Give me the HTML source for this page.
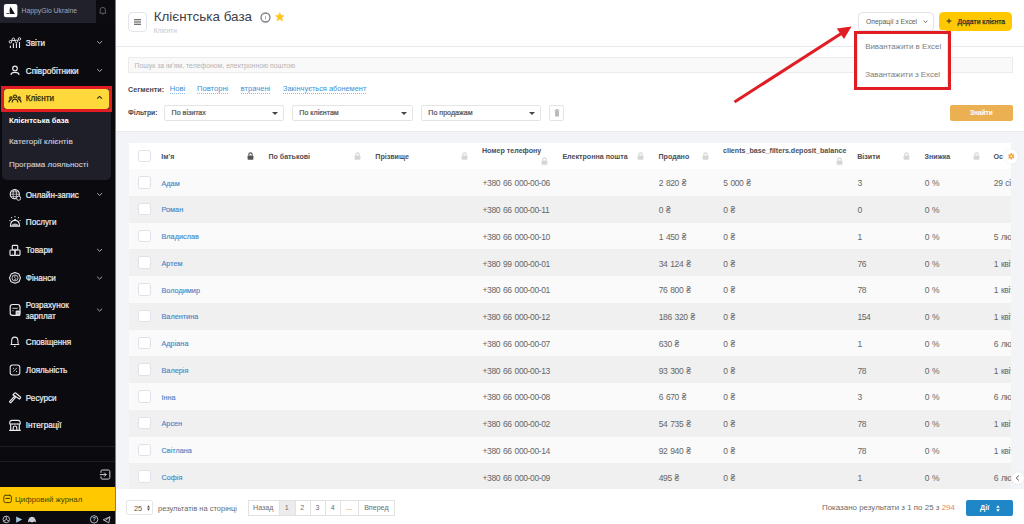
<!DOCTYPE html>
<html><head><meta charset="utf-8">
<style>
*{box-sizing:border-box}
html,body{margin:0;padding:0}
body{width:1024px;height:524px;overflow:hidden;position:relative;background:#fff;font-family:"Liberation Sans",sans-serif;}
.a{position:absolute}
#sb{position:absolute;left:0;top:0;width:115px;height:524px;background:#0a0a0f}
#sbh{position:absolute;left:0;top:0;width:96px;height:22.5px;background:#21212b}
#bell{position:absolute;left:96px;top:0;width:19px;height:22.5px;background:#0b0b10}
.logo{position:absolute;left:4px;top:4px;width:13.5px;height:13.5px;background:#fff;border-radius:2.5px}
.brand{position:absolute;left:21.5px;top:6px;font-size:6.8px;color:#9d9fae;line-height:10px;white-space:nowrap}
.mi{position:absolute;left:0;width:115px;height:20px}
.mi .t{position:absolute;left:25.8px;top:0;font-weight:bold;font-size:7.4px;color:#f2f2f5;line-height:20px;white-space:nowrap}
.mi svg.ic{position:absolute;left:9px;top:4.5px;width:12px;height:11px}
.mi svg.ch{position:absolute;left:96.5px;top:7.5px;width:6px;height:4px}
#sub{position:absolute;left:1.8px;top:110px;width:109.4px;height:69.6px;background:#1f1f29;border-radius:0 0 5px 5px}
.si{position:absolute;left:8.9px;font-size:8px;color:#c9c9d2;white-space:nowrap;line-height:10px}
#hl{position:absolute;left:1.1px;top:85.9px;width:110.9px;height:25.9px;background:#22222c;border:3px solid #e11c22;border-top-width:3.1px;border-bottom-width:3px}
#hly{position:absolute;left:4.1px;top:89px;width:104.9px;height:19.8px;background:#fdd93c;border-radius:3px}
.line{position:absolute;left:0;width:115px;height:1px;background:#1e1e24}
#dj{position:absolute;left:0;top:486.9px;width:115px;height:23.8px;background:#ffc800}
.main-border{position:absolute;left:115px;top:0;width:1px;height:524px;background:#7d7e84}

/* header */
#hbtn{position:absolute;left:128px;top:12px;width:18.8px;height:19.5px;border:1px solid #e2e5ee;border-radius:4px;background:#fff}
#title{position:absolute;left:153.7px;top:9.3px;font-size:13.45px;color:#3d4047;line-height:16px;white-space:nowrap}
#subt{position:absolute;left:153.7px;top:27.4px;font-size:6.7px;color:#c3c7cf;line-height:8px}
#hline{position:absolute;left:116px;top:46px;width:908px;height:1px;background:#e8e9ec}
.btn-x{position:absolute;left:857.8px;top:12px;width:76.2px;height:19.5px;border:1px solid #e0e3ea;border-radius:4.5px;background:#fff}
.btn-add{position:absolute;left:938.6px;top:12.4px;width:73.9px;height:18.7px;border-radius:4.5px;background:#ffc800}
#search{position:absolute;left:128px;top:57px;width:884.7px;height:16px;background:#f9f9f9;border:1px solid #ebebeb;border-radius:0}
#search span{position:absolute;left:5.5px;top:0.7px;font-size:6.9px;color:#b4b4b4;line-height:14px;white-space:nowrap}
.seg{position:absolute;top:85.2px;font-size:7.6px;line-height:7.9px;color:#3b8fd6;white-space:nowrap;border-bottom:1px dotted #8dbde6}
.lbl{position:absolute;font-size:7.2px;font-weight:bold;color:#464a52;line-height:10px;white-space:nowrap}
.sel{position:absolute;top:104.8px;height:15.8px;border:1px solid #e4e4e4;border-radius:2px;background:#fff}
.sel span{position:absolute;left:6.3px;top:0;font-size:7.1px;-webkit-text-stroke:0.22px #555;color:#555;line-height:14px;white-space:nowrap}
.sel i{position:absolute;right:4.5px;top:6px;width:0;height:0;border-left:3px solid transparent;border-right:3px solid transparent;border-top:3.5px solid #444}
#find{position:absolute;left:950px;top:105px;width:62.7px;height:16px;background:#ebb052;border-radius:2px;color:#fff;font-weight:bold;font-size:6.5px;text-align:center;line-height:16px}

/* table */
#band{position:absolute;left:116px;top:131px;width:908px;height:357.7px;background:#f3f4f8;border-top:1.3px solid #ececef}
#tbl{position:absolute;left:129.3px;top:142.8px;width:881.7px;height:345.9px;overflow:hidden;background:#fff}
.row{position:absolute;left:0;width:881.5px;height:26.65px}
.row.o{background:#fafafa}
.row.e{background:#f0f0f0}
.cb{position:absolute;left:9px;top:7px;width:12.5px;height:12.5px;border:1px solid #dde1ea;border-radius:2.5px;background:#fff}
.c{position:absolute;top:1.2px;line-height:26.65px;font-size:8.5px;letter-spacing:-0.38px;word-spacing:0.9px;color:#666;white-space:nowrap}
.nm{color:#4684c6;font-size:7.3px;letter-spacing:0;word-spacing:0;top:1.4px;-webkit-text-stroke:0.12px #4684c6}
.hd{position:absolute;font-size:7.1px;font-weight:bold;color:#4b4e55;white-space:nowrap;line-height:10px}
.lk{position:absolute;width:7px;height:8px}

/* footer */
#pp{position:absolute;left:126.1px;top:499.8px;width:26.7px;height:15.5px;border:1px solid #e6e6e6;border-radius:2px}
.pg{position:absolute;top:500.2px;height:15.3px;border:1px solid #e3e3e3;font-size:7px;color:#666;text-align:center;line-height:13.3px}
#dii{position:absolute;left:966.3px;top:500px;width:46.7px;height:16px;background:#1f86c7;border-radius:2px}
</style></head>
<body>
<!-- SIDEBAR -->
<div id="sb">
<div id="sbh"></div><div id="bell"></div>
<div id="sub"></div><div id="hl"></div><div id="hly"></div>
<div class="a" style="left:21.5px;top:6.59px;font-size:6.8px;line-height:8.5px;color:#a4a6b4;white-space:nowrap;">HappyGio Ukraine</div>
<div class="a" style="left:25.8px;top:38.68px;font-size:8.15px;line-height:10.19px;color:#ececf0;white-space:nowrap;-webkit-text-stroke:0.22px #ececf0;">Звіти</div>
<div class="a" style="left:25.8px;top:66.68px;font-size:8.15px;line-height:10.19px;color:#ececf0;white-space:nowrap;-webkit-text-stroke:0.22px #ececf0;">Співробітники</div>
<div class="a" style="left:25.8px;top:190.68px;font-size:8.15px;line-height:10.19px;color:#ececf0;white-space:nowrap;-webkit-text-stroke:0.22px #ececf0;">Онлайн-запис</div>
<div class="a" style="left:25.8px;top:218.48px;font-size:8.15px;line-height:10.19px;color:#ececf0;white-space:nowrap;-webkit-text-stroke:0.22px #ececf0;">Послуги</div>
<div class="a" style="left:25.8px;top:246.18px;font-size:8.15px;line-height:10.19px;color:#ececf0;white-space:nowrap;-webkit-text-stroke:0.22px #ececf0;">Товари</div>
<div class="a" style="left:25.8px;top:274.28px;font-size:8.15px;line-height:10.19px;color:#ececf0;white-space:nowrap;-webkit-text-stroke:0.22px #ececf0;">Фінанси</div>
<div class="a" style="left:25.8px;top:301.18px;font-size:8.15px;line-height:10.19px;color:#ececf0;white-space:nowrap;-webkit-text-stroke:0.22px #ececf0;">Розрахунок</div>
<div class="a" style="left:25.8px;top:311.68px;font-size:8.15px;line-height:10.19px;color:#ececf0;white-space:nowrap;-webkit-text-stroke:0.22px #ececf0;">зарплат</div>
<div class="a" style="left:25.8px;top:338.48px;font-size:8.15px;line-height:10.19px;color:#ececf0;white-space:nowrap;-webkit-text-stroke:0.22px #ececf0;">Сповіщення</div>
<div class="a" style="left:25.8px;top:366.28px;font-size:8.15px;line-height:10.19px;color:#ececf0;white-space:nowrap;-webkit-text-stroke:0.22px #ececf0;">Лояльність</div>
<div class="a" style="left:25.8px;top:393.88px;font-size:8.15px;line-height:10.19px;color:#ececf0;white-space:nowrap;-webkit-text-stroke:0.22px #ececf0;">Ресурси</div>
<div class="a" style="left:25.8px;top:421.38px;font-size:8.15px;line-height:10.19px;color:#ececf0;white-space:nowrap;-webkit-text-stroke:0.22px #ececf0;">Інтеграції</div>
<div class="a" style="left:25.8px;top:94.28px;font-size:8.15px;line-height:10.19px;color:#302806;white-space:nowrap;-webkit-text-stroke:0.25px #302806;">Клієнти</div>
<div class="a" style="left:8.9px;top:115.94px;font-size:7.58px;line-height:9.47px;color:#ffffff;font-weight:bold;white-space:nowrap;">Клієнтська база</div>
<div class="a" style="left:8.9px;top:136.83px;font-size:8.1px;line-height:10.12px;color:#d0d1da;white-space:nowrap;-webkit-text-stroke:0.12px #d0d1da;">Категорії клієнтів</div>
<div class="a" style="left:8.9px;top:160.43px;font-size:8.0px;line-height:10.0px;color:#d0d1da;white-space:nowrap;-webkit-text-stroke:0.12px #d0d1da;">Програма лояльності</div>
<div class="line" style="top:445.6px"></div><div class="line" style="top:460.8px"></div>
<div id="dj"></div>
<div class="a" style="left:15.0px;top:494.67px;font-size:7.85px;line-height:9.81px;color:#4a3f00;white-space:nowrap;">Цифровий журнал</div>
<svg class="a" style="left:0;top:0" width="115" height="524" viewBox="0 0 115 524">
<!-- logo -->
<rect x="3.9" y="3.9" width="13.5" height="13.3" rx="2.2" fill="#fff"/>
<path d="M10.6 6.8 C9.5 8.8 9.2 11.4 10.1 13.9 L14.9 13.9 Z" fill="#15151d"/>
<rect x="6.3" y="13.15" width="3.2" height="0.75" fill="#15151d"/>
<!-- bell -->
<path d="M100.2 12.3 V10 A2.6 2.6 0 0 1 105.4 10 V12.3 L106 13.2 H99.6 Z M102 14.1 H103.6" fill="none" stroke="#7a7e8c" stroke-width="0.7"/>
<!-- zviti -->
<g stroke="#ececf2" fill="none" stroke-width="1.15">
<path d="M10.4 45.8 V48 M13.4 43.2 V48 M16.4 43.2 V48 M19.5 41.9 V48" stroke-width="1.1"/>
<path d="M10.4 41.8 L13.4 39.3 L16.4 41.4 L19.5 38.9"/>
</g>
<g fill="#0a0a0f" stroke="#ececf2" stroke-width="0.9"><circle cx="10.4" cy="41.8" r="1.25"/><circle cx="13.4" cy="39.3" r="1.25"/><circle cx="16.4" cy="41.4" r="1.25"/><circle cx="19.5" cy="38.9" r="1.25"/></g>
<!-- person -->
<g stroke="#ececf2" fill="none" stroke-width="1.15"><circle cx="15" cy="68.4" r="2.3"/><path d="M11 75 C11 73.2 12.6 72.3 15 72.3 C17.4 72.3 19 73.2 19 75"/></g>
<!-- chevrons -->
<g fill="none" stroke="#c4c6cf" stroke-width="0.85">
<path d="M97.2 41.2 L99.6 43.5 L102 41.2"/><path d="M97.2 69.2 L99.6 71.5 L102 69.2"/>
<path d="M97.2 193.2 L99.6 195.5 L102 193.2"/><path d="M97.2 249 L99.6 251.3 L102 249"/><path d="M97.2 276.8 L99.6 279.1 L102 276.8"/>
<path d="M97.2 308.8 L99.6 311.1 L102 308.8"/>
</g>
<path d="M97.2 98.7 L99.6 96.4 L102 98.7" fill="none" stroke="#2b2608" stroke-width="1.1"/>
<!-- clients on yellow -->
<g fill="none" stroke="#2b2608" stroke-width="1.15" transform="translate(0,0.6)">
<circle cx="15" cy="95.9" r="1.5"/><circle cx="10.9" cy="97.5" r="1.2"/><circle cx="19.1" cy="97.5" r="1.2"/>
<path d="M12.2 102 C12.2 99.8 13.3 98.7 15 98.7 C16.7 98.7 17.8 99.8 17.8 102"/>
<path d="M9 101.8 C9 100.3 9.6 99.3 10.9 99.3"/><path d="M21 101.8 C21 100.3 20.4 99.3 19.1 99.3"/>
</g>
<!-- globe -->
<g stroke="#ececf2" fill="none" stroke-width="1.15"><circle cx="14.8" cy="194.2" r="4.6" stroke-width="1.1"/><ellipse cx="14.8" cy="194.2" rx="1.8" ry="4.6" stroke-width="0.7"/><path d="M10.3 194.2 H19.3 M11 191.8 H18.6 M11 196.6 H18.6" stroke-width="0.7"/></g>
<circle cx="18.6" cy="198.2" r="2.1" fill="#0a0a0f" stroke="#e8e8ee" stroke-width="0.9"/>
<!-- service bell -->
<g stroke="#ececf2" fill="none" stroke-width="1.15"><path d="M10.4 226.3 C10.4 222.6 12.3 220.4 15 220.4 C17.7 220.4 19.6 222.6 19.6 226.3 Z" stroke-width="1.1"/><path d="M14.2 219.6 H15.8"/></g>
<path d="M11 226 C11.5 224.5 13 223.5 15 223.5 C17 223.5 18.5 224.5 19 226 Z" fill="#b8b8c0"/>
<g fill="#e8e8ee"><circle cx="15" cy="216.7" r="0.65"/><circle cx="11.6" cy="217.7" r="0.6"/><circle cx="18.4" cy="217.7" r="0.6"/><circle cx="9.9" cy="220.6" r="0.6"/><circle cx="20.1" cy="220.6" r="0.6"/></g>
<!-- goods -->
<g stroke="#ececf2" fill="none" stroke-width="1.15" stroke-width="0.95"><rect x="12.3" y="245.4" width="5.4" height="4.6" rx="0.8"/><rect x="10" y="250" width="5" height="5.4" rx="0.8"/><rect x="15" y="250" width="5" height="5.4" rx="0.8"/></g>
<g fill="#e8e8ee"><circle cx="15" cy="248.5" r="0.4"/><circle cx="12.5" cy="254" r="0.4"/><circle cx="17.5" cy="254" r="0.4"/></g>
<!-- finance -->
<path d="M15 272.5 L18.9 274.1 L20.5 277.9 L18.9 281.7 L15 283.3 L11.1 281.7 L9.5 277.9 L11.1 274.1 Z" fill="none" stroke="#ececf2" stroke-width="1.1" stroke-linejoin="round"/>
<circle cx="15" cy="277.9" r="3" fill="none" stroke="#ececf2" stroke-width="0.75"/>
<path d="M16.1 276.5 C15.9 276.1 15.5 275.9 15 275.9 C14.4 275.9 14 276.2 14 276.8 C14 277.9 16.1 277.6 16.1 278.9 C16.1 279.5 15.6 279.8 15 279.8 C14.5 279.8 14.1 279.6 13.9 279.2 M15 275.3 V275.9 M15 279.8 V280.5" fill="none" stroke="#ececf2" stroke-width="0.6"/>
<!-- salary -->
<g stroke="#ececf2" fill="none" stroke-width="1.15"><rect x="10.2" y="304.5" width="9.8" height="10.8" rx="2.4"/><path d="M12.3 308.3 H17.7 M12.3 310.8 H13.4" stroke-width="0.8"/></g>
<rect x="15.6" y="310.4" width="4.7" height="5.5" rx="1" fill="#e0e0e6"/><path d="M16.8 313 H19" stroke="#666" stroke-width="0.6"/>
<!-- notifications -->
<g stroke="#ececf2" fill="none" stroke-width="1.15"><path d="M11.2 344.5 C11.8 343.5 11.7 342.4 11.7 340.6 C11.7 338.3 13 337.1 14.8 337.1 C16.6 337.1 17.9 338.3 17.9 340.6 C17.9 342.4 17.8 343.5 18.6 344.5 Z" stroke-width="1.05"/><path d="M14 346.4 H15.6" stroke-width="1"/></g>
<!-- loyalty -->
<g stroke="#ececf2" fill="none" stroke-width="1.15"><rect x="10.2" y="364.9" width="9.6" height="10" rx="2.4" stroke-width="1.05"/><path d="M13.3 371.6 L16.9 367.8" stroke-width="0.8"/></g>
<g fill="#e8e8ee"><circle cx="13.5" cy="368.2" r="0.55"/><circle cx="16.6" cy="371.4" r="0.55"/></g>
<!-- resources hammer -->
<g stroke="#ececf2" fill="none" stroke-width="1.15" stroke-width="0.95"><path d="M10 402.4 L9.6 401.6 L14.2 396.6 L15.4 397.6 L10.8 402.8 Z"/><path d="M13 394.8 L14.3 393.4 C14.8 392.9 15.5 392.9 16 393.3 L20.4 397 C20.8 397.4 20.7 397.9 20.4 398.2 L19.5 399 Z"/></g>
<!-- integrations store -->
<g stroke="#ececf2" fill="none" stroke-width="1.15" stroke-width="0.95"><path d="M9.8 424 C9.5 421.8 10.3 420.3 12 420.3 H18 C19.7 420.3 20.5 421.8 20.2 424 Z"/><path d="M10.7 424 V430.3 M19.3 424 V430.3 M9.2 430.3 H20.8"/><path d="M13.2 430.3 V427.6 C13.2 426.6 14 426 15 426 C16 426 16.8 426.6 16.8 427.6 V430.3"/></g>
<g fill="#e8e8ee"><circle cx="12.5" cy="424" r="0.5"/><circle cx="15" cy="424" r="0.5"/><circle cx="17.5" cy="424" r="0.5"/></g>
<!-- logout -->
<g fill="none" stroke="#dadae0" stroke-width="0.95"><path d="M102.2 470 H108.3 C109.2 470 109.8 470.6 109.8 471.5 V477.6 C109.8 478.5 109.2 479.1 108.3 479.1 H102.2 C101.5 479.1 101 478.6 101 477.9 V476.4 M101 472.8 V471.2 C101 470.5 101.5 470 102.2 470"/><path d="M99.8 474.6 H106.2 M104.2 472.6 L106.2 474.6 L104.2 476.6"/></g>
<!-- calendar on yellow -->
<g fill="none" stroke="#4f4300" stroke-width="1"><rect x="3.8" y="495.3" width="7.6" height="7.3" rx="1.8"/><path d="M5.4 498.4 H9.9" stroke-width="1.1"/></g><g fill="#4f4300"><circle cx="5.3" cy="495.2" r="0.6"/><circle cx="9.5" cy="495.2" r="0.6"/></g>
<!-- bottom icons -->
<g fill="none" stroke="#bcc0cc" stroke-width="0.95"><circle cx="6.3" cy="519.4" r="3.3"/><path d="M6.3 519.4 V516.1 M6.3 519.4 L3.6 521.2 M6.3 519.4 L9 521.2"/>
<circle cx="94.1" cy="519.4" r="3.7"/><path d="M103.2 519.8 L110 516.8 L108.8 522.9 Z M105.3 520.6 L110 516.8"/></g>
<path d="M16.2 516.4 L22.3 519.6 L16.2 522.8 Z" fill="#a8c4dc"/>
<path d="M28 522.5 C28 519.8 29.4 516.8 32 516.8 C34.6 516.8 36 519.8 36 522.5 L34.5 521.6 L32 522.6 L29.5 521.6 Z" fill="#c8ccd8"/>
<text x="94.1" y="521.4" font-size="5.6" font-weight="bold" fill="#bcc0cc" text-anchor="middle" font-family="Liberation Sans">?</text>
</svg>
</div>
<div class="main-border"></div>

<!-- HEADER -->
<div id="hbtn"><svg class="a" style="left:5px;top:5.6px" width="7" height="6" viewBox="0 0 7 6"><path d="M0 0.8H7M0 3H7M0 5.2H7" stroke="#444" stroke-width="1.1"/></svg></div>
<div id="title">Клієнтська база</div>
<svg class="a" style="left:260px;top:11.5px" width="11" height="11" viewBox="0 0 11 11"><circle cx="5.5" cy="5.5" r="4.5" fill="none" stroke="#7d8189" stroke-width="1.35"/><path d="M5.5 3.9V7.3" stroke="#9aa0a8" stroke-width="0.8"/></svg>
<svg class="a" style="left:274.8px;top:12.4px" width="9.6" height="9.6" viewBox="0 0 10 10"><path d="M5 0.4 L6.35 3.45 L9.7 3.75 L7.2 6 L7.95 9.4 L5 7.65 L2.05 9.4 L2.8 6 L0.3 3.75 L3.65 3.45 Z" fill="#ffc61a" stroke="#ffc61a" stroke-width="0.4" stroke-linejoin="round"/></svg>
<div id="subt">Клієнти</div>
<div id="hline"></div>

<div class="btn-x"><span class="a" style="left:7.2px;top:1.2px;font-size:6.8px;color:#5a5a5a;line-height:16.5px;white-space:nowrap">Операції з Excel</span><svg class="a" style="left:63.8px;top:7.3px" width="5" height="3.5" viewBox="0 0 5 3.5"><path d="M0.6 0.7L2.5 2.6L4.4 0.7" fill="none" stroke="#666" stroke-width="1"/></svg></div>
<div class="btn-add"><svg class="a" style="left:7px;top:6.1px" width="6" height="6" viewBox="0 0 6 6"><path d="M3 0.6V5.4M0.6 3H5.4" stroke="#2a2a2a" stroke-width="1"/></svg><span class="a" style="left:18.9px;top:0.7px;font-size:6.85px;color:#2a2a2a;-webkit-text-stroke:0.25px #2a2a2a;line-height:18.5px;white-space:nowrap">Додати клієнта</span></div>

<div id="search"><span>Пошук за ім'ям, телефоном, електронною поштою</span></div>

<div class="lbl" style="left:128px;top:84.8px">Сегменти:</div>
<div class="seg" style="left:169.7px">Нові</div>
<div class="seg" style="left:197px">Повторні</div>
<div class="seg" style="left:240.6px">втрачені</div>
<div class="seg" style="left:283px;font-size:7.42px">Закінчується абонемент</div>

<div class="lbl" style="left:128px;top:108px;font-size:6.8px">Фільтри:</div>
<div class="sel" style="left:164.3px;width:119.5px"><span>По візитах</span><i></i></div>
<div class="sel" style="left:292px;width:120.5px"><span>По клієнтам</span><i></i></div>
<div class="sel" style="left:421px;width:119.7px"><span>По продажам</span><i></i></div>
<div class="sel" style="left:549px;width:14.8px"><svg class="a" style="left:3.8px;top:3px" width="6" height="8" viewBox="0 0 6 8"><path d="M0.5 1.3H5.5M2 0.5H4" stroke="#aaa" stroke-width="0.8"/><path d="M1 2H5V7.5H1Z" fill="#bbb"/></svg></div>
<div id="find">Знайти</div>

<!-- TABLE -->
<div id="band"></div>
<div id="tbl">
  <div class="row" style="top:0;height:26.4px;background:#fff">
    <div class="cb"></div>
    <span class="hd" style="left:32px;top:9.4px">Ім'я</span><svg class="lk" style="left:117.5px;top:9.4px" viewBox="0 0 7 8"><path d="M1.8 3.6V2.6A1.7 1.7 0 0 1 5.2 2.6V3.6" fill="none" stroke="#555" stroke-width="1.1"/><rect x="0.6" y="3.4" width="5.8" height="4.4" rx="0.8" fill="#555"/></svg><span class="hd" style="left:139.1px;top:9.4px">По батькові</span><svg class="lk" style="left:224.5px;top:9.4px" viewBox="0 0 7 8"><path d="M1.8 3.6V2.6A1.7 1.7 0 0 1 5.2 2.6V3.6" fill="none" stroke="#d6d6d6" stroke-width="1.1"/><rect x="0.6" y="3.4" width="5.8" height="4.4" rx="0.8" fill="#d6d6d6"/></svg><span class="hd" style="left:246px;top:9.4px">Прізвище</span><svg class="lk" style="left:331.5px;top:9.4px" viewBox="0 0 7 8"><path d="M1.8 3.6V2.6A1.7 1.7 0 0 1 5.2 2.6V3.6" fill="none" stroke="#d6d6d6" stroke-width="1.1"/><rect x="0.6" y="3.4" width="5.8" height="4.4" rx="0.8" fill="#d6d6d6"/></svg><span class="hd" style="left:352.7px;top:3.2px">Номер телефону</span><svg class="lk" style="left:412px;top:14px" viewBox="0 0 7 8"><path d="M1.8 3.6V2.6A1.7 1.7 0 0 1 5.2 2.6V3.6" fill="none" stroke="#d6d6d6" stroke-width="1.1"/><rect x="0.6" y="3.4" width="5.8" height="4.4" rx="0.8" fill="#d6d6d6"/></svg><span class="hd" style="left:433.1px;top:9.4px">Електронна пошта</span><svg class="lk" style="left:508.1px;top:9.4px" viewBox="0 0 7 8"><path d="M1.8 3.6V2.6A1.7 1.7 0 0 1 5.2 2.6V3.6" fill="none" stroke="#d6d6d6" stroke-width="1.1"/><rect x="0.6" y="3.4" width="5.8" height="4.4" rx="0.8" fill="#d6d6d6"/></svg><span class="hd" style="left:529.2px;top:9.4px">Продано</span><svg class="lk" style="left:572.5px;top:9.4px" viewBox="0 0 7 8"><path d="M1.8 3.6V2.6A1.7 1.7 0 0 1 5.2 2.6V3.6" fill="none" stroke="#d6d6d6" stroke-width="1.1"/><rect x="0.6" y="3.4" width="5.8" height="4.4" rx="0.8" fill="#d6d6d6"/></svg><span class="hd" style="left:593.7px;top:3.2px">clients_base_filters.deposit_balance</span><svg class="lk" style="left:707.1px;top:14px" viewBox="0 0 7 8"><path d="M1.8 3.6V2.6A1.7 1.7 0 0 1 5.2 2.6V3.6" fill="none" stroke="#d6d6d6" stroke-width="1.1"/><rect x="0.6" y="3.4" width="5.8" height="4.4" rx="0.8" fill="#d6d6d6"/></svg><span class="hd" style="left:727.9px;top:9.4px">Візити</span><svg class="lk" style="left:773.9px;top:9.4px" viewBox="0 0 7 8"><path d="M1.8 3.6V2.6A1.7 1.7 0 0 1 5.2 2.6V3.6" fill="none" stroke="#d6d6d6" stroke-width="1.1"/><rect x="0.6" y="3.4" width="5.8" height="4.4" rx="0.8" fill="#d6d6d6"/></svg><span class="hd" style="left:795.3px;top:9.4px">Знижка</span><svg class="lk" style="left:843.3px;top:9.4px" viewBox="0 0 7 8"><path d="M1.8 3.6V2.6A1.7 1.7 0 0 1 5.2 2.6V3.6" fill="none" stroke="#d6d6d6" stroke-width="1.1"/><rect x="0.6" y="3.4" width="5.8" height="4.4" rx="0.8" fill="#d6d6d6"/></svg><span class="hd" style="left:864.1px;top:9.4px">Ос</span>
  </div>
  <!--ROWS--><div class="row o" style="top:26.40px"><div class="cb"></div><span class="c nm" style="left:32.2px">Адам</span><span class="c" style="left:353.2px">+380 66 000-00-06</span><span class="c" style="left:529.4px">2 820 ₴</span><span class="c" style="left:593.9px">5 000 ₴</span><span class="c" style="left:728.1px">3</span><span class="c" style="left:795.5px">0 %</span><span class="c" style="left:864.5px">29 сі</span></div>
<div class="row e" style="top:53.15px"><div class="cb"></div><span class="c nm" style="left:32.2px">Роман</span><span class="c" style="left:353.2px">+380 66 000-00-11</span><span class="c" style="left:529.4px">0 ₴</span><span class="c" style="left:593.9px">0 ₴</span><span class="c" style="left:728.1px">0</span><span class="c" style="left:795.5px">0 %</span></div>
<div class="row o" style="top:79.90px"><div class="cb"></div><span class="c nm" style="left:32.2px">Владислав</span><span class="c" style="left:353.2px">+380 66 000-00-10</span><span class="c" style="left:529.4px">1 450 ₴</span><span class="c" style="left:593.9px">0 ₴</span><span class="c" style="left:728.1px">1</span><span class="c" style="left:795.5px">0 %</span><span class="c" style="left:864.5px">5 лют</span></div>
<div class="row e" style="top:106.65px"><div class="cb"></div><span class="c nm" style="left:32.2px">Артем</span><span class="c" style="left:353.2px">+380 99 000-00-01</span><span class="c" style="left:529.4px">34 124 ₴</span><span class="c" style="left:593.9px">0 ₴</span><span class="c" style="left:728.1px">76</span><span class="c" style="left:795.5px">0 %</span><span class="c" style="left:864.5px">1 квіт</span></div>
<div class="row o" style="top:133.40px"><div class="cb"></div><span class="c nm" style="left:32.2px">Володимир</span><span class="c" style="left:353.2px">+380 66 000-00-01</span><span class="c" style="left:529.4px">76 800 ₴</span><span class="c" style="left:593.9px">0 ₴</span><span class="c" style="left:728.1px">78</span><span class="c" style="left:795.5px">0 %</span><span class="c" style="left:864.5px">1 квіт</span></div>
<div class="row e" style="top:160.15px"><div class="cb"></div><span class="c nm" style="left:32.2px">Валентина</span><span class="c" style="left:353.2px">+380 66 000-00-12</span><span class="c" style="left:529.4px">186 320 ₴</span><span class="c" style="left:593.9px">0 ₴</span><span class="c" style="left:728.1px">154</span><span class="c" style="left:795.5px">0 %</span><span class="c" style="left:864.5px">1 квіт</span></div>
<div class="row o" style="top:186.90px"><div class="cb"></div><span class="c nm" style="left:32.2px">Адріана</span><span class="c" style="left:353.2px">+380 66 000-00-07</span><span class="c" style="left:529.4px">630 ₴</span><span class="c" style="left:593.9px">0 ₴</span><span class="c" style="left:728.1px">1</span><span class="c" style="left:795.5px">0 %</span><span class="c" style="left:864.5px">6 лют</span></div>
<div class="row e" style="top:213.65px"><div class="cb"></div><span class="c nm" style="left:32.2px">Валерія</span><span class="c" style="left:353.2px">+380 66 000-00-13</span><span class="c" style="left:529.4px">93 300 ₴</span><span class="c" style="left:593.9px">0 ₴</span><span class="c" style="left:728.1px">78</span><span class="c" style="left:795.5px">0 %</span><span class="c" style="left:864.5px">1 квіт</span></div>
<div class="row o" style="top:240.40px"><div class="cb"></div><span class="c nm" style="left:32.2px">Інна</span><span class="c" style="left:353.2px">+380 66 000-00-08</span><span class="c" style="left:529.4px">6 670 ₴</span><span class="c" style="left:593.9px">0 ₴</span><span class="c" style="left:728.1px">3</span><span class="c" style="left:795.5px">0 %</span><span class="c" style="left:864.5px">6 лют</span></div>
<div class="row e" style="top:267.15px"><div class="cb"></div><span class="c nm" style="left:32.2px">Арсен</span><span class="c" style="left:353.2px">+380 66 000-00-02</span><span class="c" style="left:529.4px">54 735 ₴</span><span class="c" style="left:593.9px">0 ₴</span><span class="c" style="left:728.1px">78</span><span class="c" style="left:795.5px">0 %</span><span class="c" style="left:864.5px">1 квіт</span></div>
<div class="row o" style="top:293.90px"><div class="cb"></div><span class="c nm" style="left:32.2px">Світлана</span><span class="c" style="left:353.2px">+380 66 000-00-14</span><span class="c" style="left:529.4px">92 940 ₴</span><span class="c" style="left:593.9px">0 ₴</span><span class="c" style="left:728.1px">78</span><span class="c" style="left:795.5px">0 %</span><span class="c" style="left:864.5px">1 квіт</span></div>
<div class="row e" style="top:320.65px"><div class="cb"></div><span class="c nm" style="left:32.2px">Софія</span><span class="c" style="left:353.2px">+380 66 000-00-09</span><span class="c" style="left:529.4px">495 ₴</span><span class="c" style="left:593.9px">0 ₴</span><span class="c" style="left:728.1px">1</span><span class="c" style="left:795.5px">0 %</span><span class="c" style="left:864.5px">6 лют</span></div><!--/ROWS-->
</div>

<div class="a" style="left:1003.6px;top:149px;width:14.6px;height:14.6px;border-radius:50%;background:#fff;box-shadow:0 0 1.5px rgba(0,0,0,0.14)"><svg class="a" style="left:4px;top:4px" width="6.6" height="6.6" viewBox="0 0 8 8"><g fill="#f6a43f"><circle cx="4" cy="4" r="2.7"/><rect x="3.1" y="0" width="1.8" height="8" rx="0.5"/><rect x="3.1" y="0" width="1.8" height="8" rx="0.5" transform="rotate(60 4 4)"/><rect x="3.1" y="0" width="1.8" height="8" rx="0.5" transform="rotate(-60 4 4)"/></g><circle cx="4" cy="4" r="1.05" fill="#fff"/></svg></div>
<div class="a" style="left:1011.8px;top:472.4px;width:12px;height:12px;border-radius:50%;background:#fff;box-shadow:0 0 2px rgba(0,0,0,0.1)"><svg class="a" style="left:3.5px;top:3px" width="5" height="6" viewBox="0 0 5 6"><path d="M3.8 0.6L1.2 3L3.8 5.4" fill="none" stroke="#555" stroke-width="1"/></svg></div>

<!-- FOOTER -->
<div id="pp"><span class="a" style="left:6.9px;top:0.9px;font-size:7.4px;color:#555;line-height:13.3px">25</span><svg class="a" style="left:19.5px;top:4px" width="3" height="6" viewBox="0 0 3 6"><path d="M1.5 0.2L2.9 2.6H0.1Z M1.5 5.8L2.9 3.4H0.1Z" fill="#444"/></svg></div>
<div class="a" style="left:158px;top:504px;font-size:7.5px;color:#6a6a6a;line-height:10px;white-space:nowrap">результатів на сторінці</div>
<div class="a" style="left:247.5px;top:500.2px;width:147.2px;height:15.4px;border:1px solid #e2e2e2;background:#fff"></div><div class="a" style="left:279px;top:501.2px;width:15.7px;height:13.4px;background:#ececec"></div><div class="a" style="left:279px;top:500.2px;width:1px;height:15.4px;background:#e2e2e2"></div><div class="a" style="left:294.7px;top:500.2px;width:1px;height:15.4px;background:#e2e2e2"></div><div class="a" style="left:309.8px;top:500.2px;width:1px;height:15.4px;background:#e2e2e2"></div><div class="a" style="left:325.3px;top:500.2px;width:1px;height:15.4px;background:#e2e2e2"></div><div class="a" style="left:340px;top:500.2px;width:1px;height:15.4px;background:#e2e2e2"></div><div class="a" style="left:358px;top:500.2px;width:1px;height:15.4px;background:#e2e2e2"></div><div class="a" style="left:247.5px;top:502.1px;width:31.5px;text-align:center;font-size:7.1px;color:#6c6c6c;line-height:13.4px">Назад</div><div class="a" style="left:279px;top:502.1px;width:15.7px;text-align:center;font-size:7.1px;color:#6c6c6c;line-height:13.4px">1</div><div class="a" style="left:294.7px;top:502.1px;width:15.1px;text-align:center;font-size:7.1px;color:#6c6c6c;line-height:13.4px">2</div><div class="a" style="left:309.8px;top:502.1px;width:15.5px;text-align:center;font-size:7.1px;color:#6c6c6c;line-height:13.4px">3</div><div class="a" style="left:325.3px;top:502.1px;width:14.7px;text-align:center;font-size:7.1px;color:#6c6c6c;line-height:13.4px">4</div><div class="a" style="left:340px;top:502.1px;width:18.0px;text-align:center;font-size:7.1px;color:#6c6c6c;line-height:13.4px">...</div><div class="a" style="left:358px;top:502.1px;width:36.7px;text-align:center;font-size:7.1px;color:#6c6c6c;line-height:13.4px">Вперед</div>
<div class="a" style="left:822px;top:503px;font-size:7.95px;color:#6a6a6a;line-height:10px;white-space:nowrap">Показано результати з 1 по 25 з <span style="color:#f0845a">294</span></div>
<div id="dii"><span class="a" style="left:13.8px;top:0;font-size:7.2px;font-weight:bold;color:#fff;line-height:16px">Дії</span><svg class="a" style="left:30px;top:4.5px" width="4" height="7" viewBox="0 0 4 7"><path d="M2 0.3L3.8 2.8H0.2Z M2 6.7L3.8 4.2H0.2Z" fill="#fff"/></svg></div>

<!-- DROPDOWN + ANNOTATION -->
<div class="a" style="left:856.5px;top:30px;width:91.5px;height:57.6px;background:#fff;border-radius:4px;border:1px solid #e3e7ec"></div>
<div class="a" style="left:865.2px;top:41.5px;font-size:7.9px;color:#7d7d7d;line-height:10px;white-space:nowrap">Вивантажити в Excel</div>
<div class="a" style="left:865.2px;top:70.1px;font-size:7.9px;color:#7d7d7d;line-height:10px;white-space:nowrap">Завантажити з Excel</div>
<div class="a" style="left:854px;top:31px;width:96.6px;height:58.6px;border:3.2px solid #e11d24"></div>
<svg class="a" style="left:0;top:0" width="1024" height="524" viewBox="0 0 1024 524"><path d="M734.5 102 L842 33" stroke="#e11d24" stroke-width="3" fill="none"/><path d="M851.5 26.6 L836.8 28.4 L844 38.9 Z" fill="#e11d24"/></svg>
</body></html>
